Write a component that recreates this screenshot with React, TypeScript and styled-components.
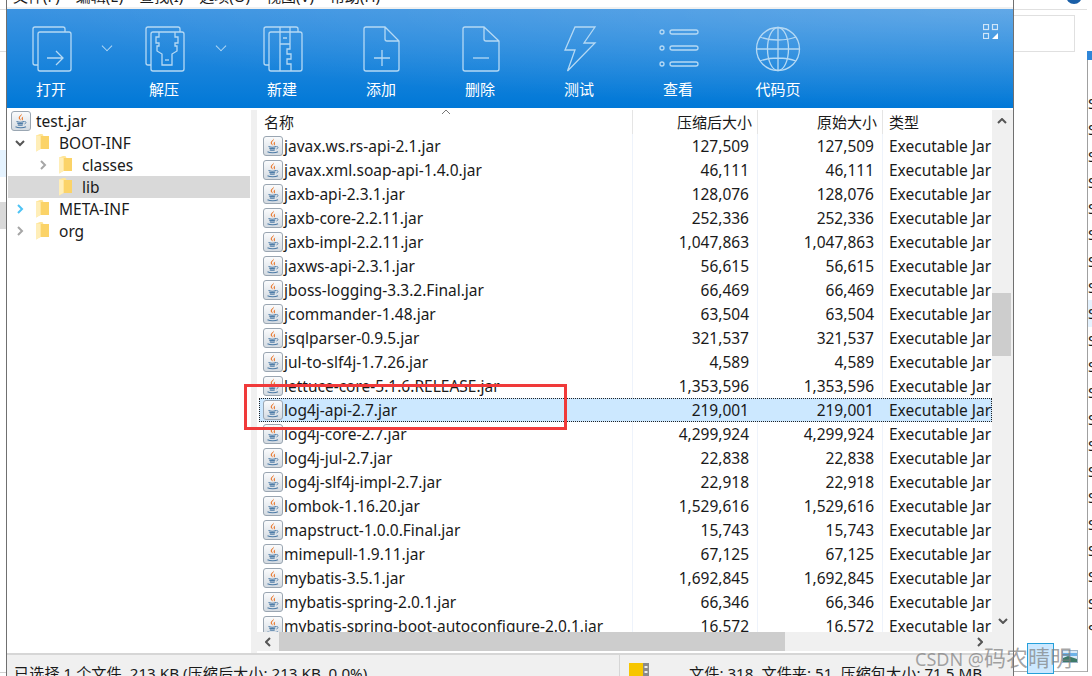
import React from "react";
import styled, { createGlobalStyle } from "styled-components";

type FileRow = { name: string; size: string; selected?: boolean };

const files: FileRow[] = [
    { name: "javax.ws.rs-api-2.1.jar", size: "127,509" },
    { name: "javax.xml.soap-api-1.4.0.jar", size: "46,111" },
    { name: "jaxb-api-2.3.1.jar", size: "128,076" },
    { name: "jaxb-core-2.2.11.jar", size: "252,336" },
    { name: "jaxb-impl-2.2.11.jar", size: "1,047,863" },
    { name: "jaxws-api-2.3.1.jar", size: "56,615" },
    { name: "jboss-logging-3.3.2.Final.jar", size: "66,469" },
    { name: "jcommander-1.48.jar", size: "63,504" },
    { name: "jsqlparser-0.9.5.jar", size: "321,537" },
    { name: "jul-to-slf4j-1.7.26.jar", size: "4,589" },
    { name: "lettuce-core-5.1.6.RELEASE.jar", size: "1,353,596" },
    { name: "log4j-api-2.7.jar", size: "219,001", selected: true },
    { name: "log4j-core-2.7.jar", size: "4,299,924" },
    { name: "log4j-jul-2.7.jar", size: "22,838" },
    { name: "log4j-slf4j-impl-2.7.jar", size: "22,918" },
    { name: "lombok-1.16.20.jar", size: "1,529,616" },
    { name: "mapstruct-1.0.0.Final.jar", size: "15,743" },
    { name: "mimepull-1.9.11.jar", size: "67,125" },
    { name: "mybatis-3.5.1.jar", size: "1,692,845" },
    { name: "mybatis-spring-2.0.1.jar", size: "66,346" },
    { name: "mybatis-spring-boot-autoconfigure-2.0.1.jar", size: "16,572" },
];

const menus = ["文件(F)", "编辑(E)", "查找(I)", "选项(O)", "视图(V)", "帮助(H)"];

const FONT = `"Noto Sans", "Noto Sans CJK SC", sans-serif`;
const LINE = "#b5d9f4";

const GlobalStyle = createGlobalStyle`
    html, body { margin: 0; padding: 0; background: #fff; }
    body { font-family: ${FONT}; font-size: 15.5px; color: #1a1a1a; }
    * { box-sizing: border-box; }
`;

function JarIcon() {
    return (
        <IconBox viewBox="0 0 20 20">
            <defs>
                <linearGradient id="jarBg" x1="0" y1="0" x2="0" y2="1">
                    <stop offset="0" stopColor="#fbfcfd" />
                    <stop offset="1" stopColor="#d3dae1" />
                </linearGradient>
            </defs>
            <rect x="0.5" y="0.5" width="19" height="19" rx="2.5" fill="url(#jarBg)" stroke="#9aa6b2" />
            <path d="M10.6 2.5c1 2-2.4 3-1.6 5 .3.7.8 1.2 1 2-1-.6-2.6-1.6-2.3-3 .3-1.6 2.6-2.2 2.9-4z" fill="#e8762b" />
            <path d="M12.2 5.4c-1 .7-1.9 1.4-1.5 2.6.2.6.4 1 .2 1.6.9-.5 1.3-1.3 1-2.2-.2-.7-.1-1.3.3-2z" fill="#e8762b" />
            <path d="M5.5 10.5c1.7.6 6 .6 7.6 0M6.2 12.2c1.5.4 4.6.4 6 0M6.8 13.9c1.3.3 3.6.3 5 0M4.5 15.8c2.4 1.2 8 1.2 10.5 0" fill="none" stroke="#4d7ba6" strokeWidth="1.1" />
            <path d="M13.3 10.6c2-.5 2.4 1.7.2 2.4" fill="none" stroke="#4d7ba6" strokeWidth="0.9" />
        </IconBox>
    );
}

function FolderIcon() {
    return (
        <FolderBox viewBox="0 0 13 18">
            <path d="M0 1.5 4 0h2.5l1 2H13v13H4.5L0 17.5z" fill="#ffe597" />
            <path d="M4.5 2H13v13H4.5z" fill="#fbd368" />
            <path d="M0 1.5 4.5 2v13L0 17.5z" fill="#ffeeb8" />
        </FolderBox>
    );
}

function Chevron({ open, color }: { open?: boolean; color: string }) {
    return (
        <ChevronBox viewBox="0 0 10 10" fill="none" stroke={color} strokeWidth="2">
            <path d={open ? "M1 3l4 4 4-4" : "M3 1l4 4-4 4"} />
        </ChevronBox>
    );
}

const toolIcons: Record<string, React.ReactNode> = {
    open: (
        <>
            <path d="M9 39H6a2 2 0 0 1-2-2V3a2 2 0 0 1 2-2h28a2 2 0 0 1 2 2v3" />
            <rect x="9" y="6" width="33" height="39" rx="2" />
            <path d="M18 32h16M27 25l7 7-7 7" />
        </>
    ),
    extract: (
        <>
            <path d="M9 39H6a2 2 0 0 1-2-2V3a2 2 0 0 1 2-2h30a2 2 0 0 1 2 2v3" />
            <rect x="9" y="6" width="33" height="39" rx="2" />
            <path d="M17 6v5h-3v6h3v3h-2v5l5 3v11h10V28l5-3v-5h-2v-3h3v-6h-3V6" />
            <path d="M23 34h4" />
        </>
    ),
    create: (
        <>
            <path d="M9 39H6a2 2 0 0 1-2-2V3a2 2 0 0 1 2-2h30a2 2 0 0 1 2 2v3" />
            <rect x="9" y="6" width="33" height="39" rx="2" />
            <path d="M20 1v17h10V1M23 12h4M20 18v27M30 18v5h-3v5h4v5h-4v5h4v7" />
        </>
    ),
    add: (
        <>
            <path d="M26 1H7a2 2 0 0 0-2 2v40a2 2 0 0 0 2 2h31a2 2 0 0 0 2-2V15zM26 1v12a2 2 0 0 0 2 2h12" />
            <path d="M23 24v16M15 32h16" />
        </>
    ),
    remove: (
        <>
            <path d="M26 1H7a2 2 0 0 0-2 2v40a2 2 0 0 0 2 2h32a2 2 0 0 0 2-2V15zM26 1v12a2 2 0 0 0 2 2h13" />
            <path d="M15 32h16" />
        </>
    ),
    test: <path d="M18 1h20L27 17h11L10.5 45 18 24H8z" />,
    view: (
        <>
            <circle cx="6" cy="6" r="2" />
            <circle cx="6" cy="22" r="2" />
            <circle cx="6" cy="38" r="2" />
            <rect x="14" y="4" width="28" height="4" rx="2" />
            <rect x="14" y="20" width="28" height="4" rx="2" />
            <rect x="14" y="36" width="28" height="4" rx="2" />
        </>
    ),
    code: (
        <>
            <circle cx="22" cy="23" r="21.5" />
            <ellipse cx="22" cy="23" rx="10.5" ry="21.5" />
            <path d="M22 1.5v43M.5 23h43M4 11c10 4 26 4 36 0M4 35c10-4 26-4 36 0" />
        </>
    ),
};

function ToolItem({ icon, label, width }: { icon: string; label: string; width: number }) {
    return (
        <Tool $width={width}>
            <ToolGlyph viewBox="0 0 44 46">{toolIcons[icon]}</ToolGlyph>
            <ToolLabel>{label}</ToolLabel>
        </Tool>
    );
}

function Caret() {
    return (
        <CaretBox viewBox="0 0 10 6">
            <path d="M1 5l4-4 4 4" />
        </CaretBox>
    );
}

function App() {
    return (
        <Page>
            <GlobalStyle />
            <LeftStrip>
                <Selected $bg="#e5f3ff" />
                <Selected $bg="#d9d9d9" />
            </LeftStrip>

            <Window>
                <MenuBar>
                    {menus.map((m) => <MenuItem key={m}>{m}</MenuItem>)}
                </MenuBar>

                <Toolbar>
                    <ToolItem icon="open" label="打开" width={88} />
                    <DropArrow $width={24} />
                    <ToolItem icon="extract" label="解压" width={90} />
                    <DropArrow $width={22} />
                    <ToolItem icon="create" label="新建" width={102} />
                    <ToolItem icon="add" label="添加" width={96} />
                    <ToolItem icon="remove" label="删除" width={102} />
                    <ToolItem icon="test" label="测试" width={96} />
                    <ToolItem icon="view" label="查看" width={102} />
                    <ToolItem icon="code" label="代码页" width={98} />
                    <LayoutToggle viewBox="0 0 15 15">
                        <rect x="0.5" y="0.5" width="5" height="5" />
                        <rect x="9.5" y="0.5" width="5" height="5" />
                        <rect x="0.5" y="9.5" width="5" height="5" />
                        <path d="M15 9v6H9z" fill="#fff" stroke="none" />
                    </LayoutToggle>
                </Toolbar>

                <Body>
                    <Tree>
                        <TreeRow $depth={0}><JarIcon /><TreeLabel>test.jar</TreeLabel></TreeRow>
                        <TreeRow $depth={1}><Chevron open color="#555" /><FolderIcon /><TreeLabel>BOOT-INF</TreeLabel></TreeRow>
                        <TreeRow $depth={2}><Chevron color="#a6a6a6" /><FolderIcon /><TreeLabel>classes</TreeLabel></TreeRow>
                        <TreeRow $depth={2} $active><ChevronGap /><FolderIcon /><TreeLabel>lib</TreeLabel></TreeRow>
                        <TreeRow $depth={1}><Chevron color="#4dc3f5" /><FolderIcon /><TreeLabel>META-INF</TreeLabel></TreeRow>
                        <TreeRow $depth={1}><Chevron color="#a6a6a6" /><FolderIcon /><TreeLabel>org</TreeLabel></TreeRow>
                    </Tree>

                    <ListPane>
                        <ListArea>
                            <ListColumn>
                                <HeaderRow>
                                    <HeadName>名称<SortMark viewBox="0 0 10 6"><path d="M1 5l4-4 4 4" /></SortMark></HeadName>
                                    <HeadNum>压缩后大小</HeadNum>
                                    <HeadNum>原始大小</HeadNum>
                                    <HeadType>类型</HeadType>
                                </HeaderRow>
                                <Rows>
                                    {files.map((f) => (
                                        <Row key={f.name} $selected={f.selected}>
                                            <NameCell $selected={f.selected}><JarIcon /><FileName>{f.name}</FileName></NameCell>
                                            <NumCell $selected={f.selected}>{f.size}</NumCell>
                                            <NumCell $selected={f.selected}>{f.size}</NumCell>
                                            <TypeCell>Executable Jar</TypeCell>
                                        </Row>
                                    ))}
                                </Rows>
                            </ListColumn>
                            <VScroll>
                                <ScrollEnd><Caret /></ScrollEnd>
                                <VTrack><VThumb /></VTrack>
                                <ScrollEnd $down><Caret /></ScrollEnd>
                            </VScroll>
                        </ListArea>
                        <HScroll>
                            <HEnd><Caret /></HEnd>
                            <HThumb />
                            <HEnd $right><Caret /></HEnd>
                        </HScroll>
                    </ListPane>
                </Body>

                <StatusBar>
                    <StatusLeft>已选择 1 个文件, 213 KB (压缩后大小: 213 KB, 0.0%)</StatusLeft>
                    <StatusRight>
                        <ZipGlyph viewBox="0 0 20 22">
                            <rect x="0" y="1" width="20" height="21" fill="#f7c600" />
                            <rect x="14" y="1" width="6" height="21" fill="#8a8a8a" />
                            <rect x="15.5" y="4" width="3" height="2" fill="#eee" />
                            <rect x="15.5" y="9" width="3" height="2" fill="#eee" />
                            <rect x="15.5" y="14" width="3" height="2" fill="#eee" />
                        </ZipGlyph>
                        <StatusSummary>文件: 318, 文件夹: 51, 压缩包大小: 71.5 MB</StatusSummary>
                    </StatusRight>
                </StatusBar>
            </Window>

            <SidePane>
                <TopDot />
                <SearchBox />
                <SideFooter>
                    <ThumbButton />
                    <PictureGlyph viewBox="0 0 16 13">
                        <rect x="0.5" y="0.5" width="15" height="12" fill="#dbeaf7" stroke="#9fb4c6" />
                        <path d="M1 8l5-2 9 3v3H1z" fill="#3d7a68" />
                        <path d="M1 3h14v3H1z" fill="#6db3e8" />
                    </PictureGlyph>
                </SideFooter>
            </SidePane>

            <NextWindow>
                <BlueTab />
                <NextLines>
                    {Array.from({ length: 21 }).map((_, i) => (
                        <NextLine key={i} $hot={i === 8}>S</NextLine>
                    ))}
                </NextLines>
                <NextBottom />
            </NextWindow>

            <RedMark />
            <Watermark>CSDN @<WatermarkCjk>码农晴明</WatermarkCjk></Watermark>
        </Page>
    );
}

const Page = styled.div`
    position: relative;
    display: flex;
    width: 1092px;
    height: 676px;
    overflow: hidden;
    background: #fff;
`;

const LeftStrip = styled.div`
    width: 6px;
    flex: none;
    height: 673px;
    padding-top: 150px;
    border-bottom: 1px solid #d0d0d0;
    display: flex;
    flex-direction: column;
    gap: 25px;
    background:
        linear-gradient(#ddd, #ddd) 0 9px / 100% 1px no-repeat,
        linear-gradient(#ddd, #ddd) 0 51px / 100% 1px no-repeat;
`;

const Selected = styled.div<{ $bg: string }>`
    height: 27px;
    background: ${(p) => p.$bg};
`;

const Window = styled.div`
    width: 1008px;
    flex: none;
    height: 676px;
    display: flex;
    flex-direction: column;
    overflow: hidden;
    border-left: 1px solid #707070;
    border-right: 1px solid #707070;
`;

const MenuBar = styled.div`
    height: 9px;
    flex: none;
    display: flex;
    align-items: flex-end;
    gap: 16px;
    padding: 0 0 1px 6px;
    overflow: hidden;
    border-bottom: 2px solid #f0f0f0;
`;

const MenuItem = styled.span`
    flex: none;
    font-size: 15px;
    line-height: 20px;
    white-space: nowrap;
`;

const Toolbar = styled.div`
    height: 99px;
    flex: none;
    display: flex;
    align-items: flex-start;
    background:
        radial-gradient(ellipse at top right, rgba(255, 255, 255, 0.2), rgba(255, 255, 255, 0) 70%),
        linear-gradient(to bottom, #3b93e1, #0078d7);
`;

const Tool = styled.div<{ $width: number }>`
    flex: none;
    width: ${(p) => p.$width}px;
    padding-top: 17px;
    display: flex;
    flex-direction: column;
    align-items: center;
`;

const ToolGlyph = styled.svg`
    width: 44px;
    height: 46px;
    fill: none;
    stroke: ${LINE};
    stroke-width: 1.3;
    overflow: visible;
`;

const ToolLabel = styled.span`
    margin-top: 7px;
    font-size: 15px;
    line-height: 20px;
    color: #fff;
`;

const DropArrow = styled.div<{ $width: number }>`
    flex: none;
    width: ${(p) => p.$width}px;
    height: 50px;
    position: relative;
    &::after {
        content: "";
        position: absolute;
        left: 8px;
        top: 33px;
        width: 7px;
        height: 7px;
        border-right: 1.3px solid ${LINE};
        border-bottom: 1.3px solid ${LINE};
        transform: rotate(45deg) scale(0.95);
    }
`;

const LayoutToggle = styled.svg`
    width: 15px;
    height: 15px;
    margin: 15px 0 0 156px;
    fill: none;
    stroke: #cfe5f8;
    stroke-width: 1.2;
`;

const Body = styled.div`
    flex: 1;
    min-height: 0;
    display: flex;
    margin-top: 2px;
`;

const Tree = styled.div`
    width: 244px;
    flex: none;
    padding: 0 1px;
`;

const TreeRow = styled.div<{ $depth: number; $active?: boolean }>`
    height: 22px;
    display: flex;
    align-items: center;
    padding-left: ${(p) => (p.$depth === 0 ? 3 : p.$depth === 1 ? 7 : 30)}px;
    background: ${(p) => (p.$active ? "#d9d9d9" : "transparent")};
    ${(p) => p.$depth === 0 && "gap: 5px;"}
`;

const TreeLabel = styled.span`
    white-space: nowrap;
`;

const IconBox = styled.svg`
    width: 20px;
    height: 20px;
    flex: none;
`;

const FolderBox = styled.svg`
    width: 13px;
    height: 18px;
    flex: none;
    margin-right: 10px;
`;

const ChevronBox = styled.svg`
    width: 10px;
    height: 10px;
    flex: none;
    margin: 0 11px 0 0;
`;

const ChevronGap = styled.span`
    width: 21px;
    flex: none;
`;

const ListPane = styled.div`
    flex: 1;
    min-width: 0;
    display: flex;
    flex-direction: column;
    border-left: 6px solid #f0f0f0;
`;

const ListArea = styled.div`
    height: 522px;
    flex: none;
    display: flex;
`;

const ListColumn = styled.div`
    width: 735px;
    flex: none;
    overflow: hidden;
    display: flex;
    flex-direction: column;
`;

const HeaderRow = styled.div`
    height: 24px;
    flex: none;
    display: flex;
    font-size: 15px;
    line-height: 24px;
`;

const HeadName = styled.div`
    position: relative;
    width: 376px;
    flex: none;
    padding-left: 7px;
    border-right: 1px solid #e5e5e5;
`;

const SortMark = styled.svg`
    position: absolute;
    left: 184px;
    top: -1px;
    width: 10px;
    height: 6px;
    fill: none;
    stroke: #777;
    stroke-width: 1;
`;

const HeadNum = styled.div`
    width: 125px;
    flex: none;
    text-align: right;
    padding-right: 5px;
    border-right: 1px solid #e5e5e5;
`;

const HeadType = styled.div`
    flex: 1;
    padding-left: 6px;
`;

const Rows = styled.div`
    flex: 1;
    min-height: 0;
    overflow: hidden;
`;

const Row = styled.div<{ $selected?: boolean }>`
    height: 24px;
    display: flex;
    align-items: center;
    margin-left: 2px;
    background: ${(p) => (p.$selected ? "#cce8ff" : "transparent")};
    outline: ${(p) => (p.$selected ? "1px dotted #222" : "none")};
    outline-offset: -1px;
    white-space: nowrap;
`;

const NameCell = styled.div<{ $selected?: boolean }>`
    width: 374px;
    height: 100%;
    flex: none;
    display: flex;
    align-items: center;
    padding-left: 4px;
    gap: 1px;
    border-right: 1px solid ${(p) => (p.$selected ? "transparent" : "#eef3fb")};
`;

const FileName = styled.span`
    white-space: nowrap;
`;

const NumCell = styled.div<{ $selected?: boolean }>`
    width: 125px;
    height: 100%;
    flex: none;
    line-height: 24px;
    text-align: right;
    padding-right: 8px;
    border-right: 1px solid ${(p) => (p.$selected ? "transparent" : "#eef3fb")};
`;

const TypeCell = styled.div`
    flex: 1;
    min-width: 0;
    padding-left: 6px;
    overflow: hidden;
`;

const VScroll = styled.div`
    flex: 1;
    display: flex;
    flex-direction: column;
    background: #f0f0f0;
`;

const ScrollEnd = styled.div<{ $down?: boolean }>`
    height: 22px;
    flex: none;
    display: flex;
    align-items: center;
    justify-content: center;
    padding-right: 2px;
    transform: ${(p) => (p.$down ? "rotate(180deg)" : "none")};
`;

const CaretBox = styled.svg`
    width: 10px;
    height: 6px;
    fill: none;
    stroke: #555;
    stroke-width: 2;
`;

const VTrack = styled.div`
    flex: 1;
    padding-top: 161px;
`;

const VThumb = styled.div`
    width: 19px;
    height: 63px;
    background: #cdcdcd;
`;

const HScroll = styled.div`
    height: 19px;
    flex: none;
    display: flex;
    align-items: stretch;
    background: #f0f0f0;
    margin-bottom: 2px;
`;

const HEnd = styled.div<{ $right?: boolean }>`
    flex: none;
    width: 22px;
    display: flex;
    align-items: center;
    justify-content: center;
    margin-left: ${(p) => (p.$right ? "184px" : 0)};
    svg {
        transform: rotate(${(p) => (p.$right ? 90 : -90)}deg);
    }
`;

const HThumb = styled.div`
    width: 506px;
    background: #cdcdcd;
`;

const StatusBar = styled.div`
    flex: none;
    height: 23px;
    display: flex;
    align-items: flex-start;
    font-size: 15.2px;
    background: #f0f0f0;
    border-top: 2px solid #d6d6d6;
    white-space: nowrap;
`;

const StatusLeft = styled.div`
    width: 612px;
    flex: none;
    padding: 8px 0 0 7px;
    line-height: 20px;
`;

const StatusRight = styled.div`
    flex: 1;
    height: 100%;
    display: flex;
    align-items: flex-start;
    border-left: 1px solid #d6d6d6;
    padding: 7px 0 0 9px;
`;

const ZipGlyph = styled.svg`
    width: 20px;
    height: 22px;
    flex: none;
`;

const StatusSummary = styled.span`
    margin: 1px 0 0 40px;
    line-height: 20px;
`;

const SidePane = styled.div`
    position: relative;
    width: 73px;
    flex: none;
    height: 672px;
    display: flex;
    flex-direction: column;
    background: linear-gradient(#e0e0e0, #e0e0e0) 0 9px / 100% 1px no-repeat;
`;

const TopDot = styled.div`
    position: absolute;
    left: 52px;
    top: -12px;
    width: 16px;
    height: 16px;
    border-radius: 50%;
    background: #1a5fa8;
`;

const SearchBox = styled.div`
    width: 61px;
    height: 37px;
    flex: none;
    margin-top: 15px;
    border: 1px solid #e0e0e0;
    border-left: 0;
`;

const SideFooter = styled.div`
    margin-top: auto;
    height: 29px;
    flex: none;
    display: flex;
    align-items: flex-start;
    padding-left: 13px;
    border-bottom: 1px solid #b0b0b0;
`;

const ThumbButton = styled.div`
    width: 27px;
    height: 31px;
    flex: none;
    background: #cce8ff;
    border: 1px solid #26a0da;
`;

const PictureGlyph = styled.svg`
    width: 16px;
    height: 13px;
    flex: none;
    margin: 7px 0 0 8px;
`;

const NextWindow = styled.div`
    flex: 1;
    display: flex;
    flex-direction: column;
    height: 672px;
    padding-top: 51px;
    font-size: 15px;
`;

const BlueTab = styled.div`
    height: 9px;
    flex: none;
    background: #2f86d8;
`;

const NextLines = styled.div`
    height: 572px;
    flex: none;
    overflow: hidden;
    padding-top: 30px;
    border-left: 1px solid #a0a0a0;
`;

const NextLine = styled.div<{ $hot?: boolean }>`
    height: 26.3px;
    line-height: 26.3px;
    background: ${(p) => (p.$hot ? "#e5f3ff" : "transparent")};
`;

const NextBottom = styled.div`
    flex: 1;
    border-left: 1px solid #a0a0a0;
`;

const RedMark = styled.div`
    position: absolute;
    left: 244px;
    top: 384px;
    width: 323px;
    height: 46px;
    border: 3px solid #f03a3a;
`;

const Watermark = styled.div`
    position: absolute;
    left: 915px;
    top: 646px;
    font-size: 18px;
    line-height: 22px;
    white-space: nowrap;
    color: rgba(125, 125, 125, 0.7);
`;

const WatermarkCjk = styled.span`
    font-size: 22px;
`;

export default App;
